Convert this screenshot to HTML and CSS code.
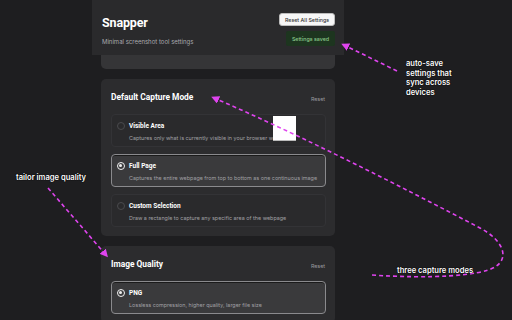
FILE: index.html
```html
<!DOCTYPE html>
<html>
<head>
<meta charset="utf-8">
<link rel="stylesheet" href="styles.css">
</head>
<body>
<div class="page">
  <div class="column">
    <header class="header">
      <div class="brand">
        <h1 class="title">Snapper</h1>
        <p class="subtitle">Minimal screenshot tool settings</p>
      </div>
      <div class="actions">
        <button class="btn-reset-all">Reset All Settings</button>
        <span class="badge-saved">Settings saved</span>
      </div>
    </header>
    <div class="stack">
      <div class="card-partial"></div>

      <section class="card">
        <div class="card-head">
          <h2 class="card-title">Default Capture Mode</h2>
          <span class="card-reset">Reset</span>
        </div>
        <div class="options">
          <div class="option">
            <span class="radio"></span>
            <div class="option-text">
              <div class="option-title">Visible Area</div>
              <div class="option-desc">Captures only what is currently visible in your browser window</div>
            </div>
          </div>
          <div class="option selected">
            <span class="radio checked"></span>
            <div class="option-text">
              <div class="option-title">Full Page</div>
              <div class="option-desc">Captures the entire webpage from top to bottom as one continuous image</div>
            </div>
          </div>
          <div class="option">
            <span class="radio"></span>
            <div class="option-text">
              <div class="option-title">Custom Selection</div>
              <div class="option-desc">Draw a rectangle to capture any specific area of the webpage</div>
            </div>
          </div>
        </div>
      </section>

      <section class="card">
        <div class="card-head">
          <h2 class="card-title">Image Quality</h2>
          <span class="card-reset">Reset</span>
        </div>
        <div class="options">
          <div class="option selected">
            <span class="radio checked"></span>
            <div class="option-text">
              <div class="option-title">PNG</div>
              <div class="option-desc">Lossless compression, higher quality, larger file size</div>
            </div>
          </div>
        </div>
      </section>
    </div>
  </div>
</div>

<div class="white-box"></div>

<svg class="annotations" width="512" height="320" viewBox="0 0 512 320">
  <defs>
    <marker id="ah" markerWidth="8" markerHeight="8" refX="5" refY="4" orient="auto" markerUnits="userSpaceOnUse">
      <path d="M0,0 L8,4 L0,8 Z" fill="#df44ee"/>
    </marker>
  </defs>
  <path class="dash" d="M397,71 L344,45" marker-end="url(#ah)"/>
  <path class="dash" d="M48,188 L106,255" marker-end="url(#ah)"/>
  <path class="dash" d="M372,275 C430,279 480,276 495,267 C510,258 503,240 480,228 C400,186 300,135 214,98" marker-end="url(#ah)"/>
</svg>

<div class="note note-save">auto-save<br>settings that<br>sync across<br>devices</div>
<div class="note note-quality">tailor image quality</div>
<div class="note note-modes">three capture modes</div>
</body>
</html>
```

FILE: styles.css
```css
* { box-sizing: border-box; }
html, body { margin: 0; padding: 0; }
body {
  width: 512px;
  height: 320px;
  overflow: hidden;
  background: #1e1e20;
  font-family: Inter, "Liberation Sans", sans-serif;
  color: #f2f2f2;
  position: relative;
}
.page {
  display: flex;
  padding-left: 92px;
}
.column {
  width: 252px;
}
.header {
  height: 55px;
  background: #2a2a2c;
  display: flex;
  justify-content: space-between;
  padding: 0 9px 0 10px;
}
.brand {
  padding-top: 15px;
}
.title {
  margin: 0;
  font-family: Roboto, "Liberation Sans", sans-serif;
  font-size: 12.5px;
  line-height: 16px;
  font-weight: 700;
  letter-spacing: -0.15px;
  color: #ffffff;
}
.subtitle {
  margin: 7px 0 0;
  font-size: 6px;
  line-height: 8px;
  color: #a9a9ad;
}
.actions {
  padding-top: 13px;
  display: flex;
  flex-direction: column;
  align-items: flex-end;
  gap: 5px;
}
.btn-reset-all {
  height: 13px;
  width: 56px;
  padding: 0;
  border: 1px solid #bdbdbd;
  border-radius: 3px;
  background: #f7f7f7;
  color: #333;
  font-family: Inter, "Liberation Sans", sans-serif;
  font-size: 5.3px;
  font-weight: 500;
}
.badge-saved {
  height: 15px;
  width: 49px;
  display: flex;
  align-items: center;
  justify-content: center;
  background: #1d351f;
  color: #8ccb8c;
  font-size: 5.3px;
  font-weight: 500;
  border-radius: 2px;
}
.stack {
  padding: 0 9px;
}
.card-partial {
  height: 14px;
  background: #353537;
  border-radius: 0 0 5px 5px;
}
.card {
  margin-top: 10px;
  background: #2c2c2e;
  border-radius: 5px;
  padding: 11px 9px 9px 10px;
}
.card-head {
  height: 14px;
  display: flex;
  justify-content: space-between;
  align-items: center;
}
.card-title {
  margin: 0;
  font-family: Roboto, "Liberation Sans", sans-serif;
  font-size: 8.4px;
  line-height: 14px;
  font-weight: 700;
  color: #ffffff;
}
.card-reset {
  font-size: 5.3px;
  color: #9a9a9e;
  padding-top: 4px;
  padding-right: 1px;
}
.options {
  margin-top: 10px;
  display: flex;
  flex-direction: column;
  gap: 7px;
}
.option {
  height: 33px;
  border: 1px solid #333336;
  border-radius: 4px;
  background: #2a2a2c;
  display: flex;
  align-items: flex-start;
  padding: 6px 6px 0 5px;
  gap: 4px;
}
.option.selected {
  background: #3a3a3c;
  border-color: #8a8a8d;
  box-shadow: inset 0 1px 0 #1a1a1a;
}
.radio {
  flex: none;
  width: 8px;
  height: 8px;
  margin-top: 1px;
  border-radius: 50%;
  border: 1px solid #4a4a4d;
}
.radio.checked {
  border: 1.2px solid #f0f0f0;
  position: relative;
}
.radio.checked::after {
  content: "";
  position: absolute;
  left: 1.2px;
  top: 1.2px;
  width: 3.2px;
  height: 3.2px;
  border-radius: 50%;
  background: #f0f0f0;
}
.option-title {
  font-family: Roboto, "Liberation Sans", sans-serif;
  font-size: 6.5px;
  line-height: 10px;
  font-weight: 700;
  color: #ffffff;
}
.option-desc {
  margin-top: 3px;
  font-size: 5.4px;
  line-height: 8px;
  color: #a0a0a4;
  white-space: nowrap;
}
.white-box {
  position: absolute;
  left: 273px;
  top: 116px;
  width: 23px;
  height: 25px;
  background: #ffffff;
  border-bottom: 1px solid #bbb;
}
.annotations {
  position: absolute;
  left: 0;
  top: 0;
}
.dash {
  fill: none;
  stroke: #df44ee;
  stroke-width: 1.6;
  stroke-dasharray: 4 3;
}
.note {
  position: absolute;
  font-size: 7.6px;
  line-height: 9.6px;
  font-weight: 600;
  color: #ffffff;
  text-shadow: 0 0 1px #000, 0 0 1px #000;
  white-space: nowrap;
}
.note-save { left: 406px; top: 59px; }
.note-quality { left: 16px; top: 173px; }
.note-modes { left: 397px; top: 266px; }
```
